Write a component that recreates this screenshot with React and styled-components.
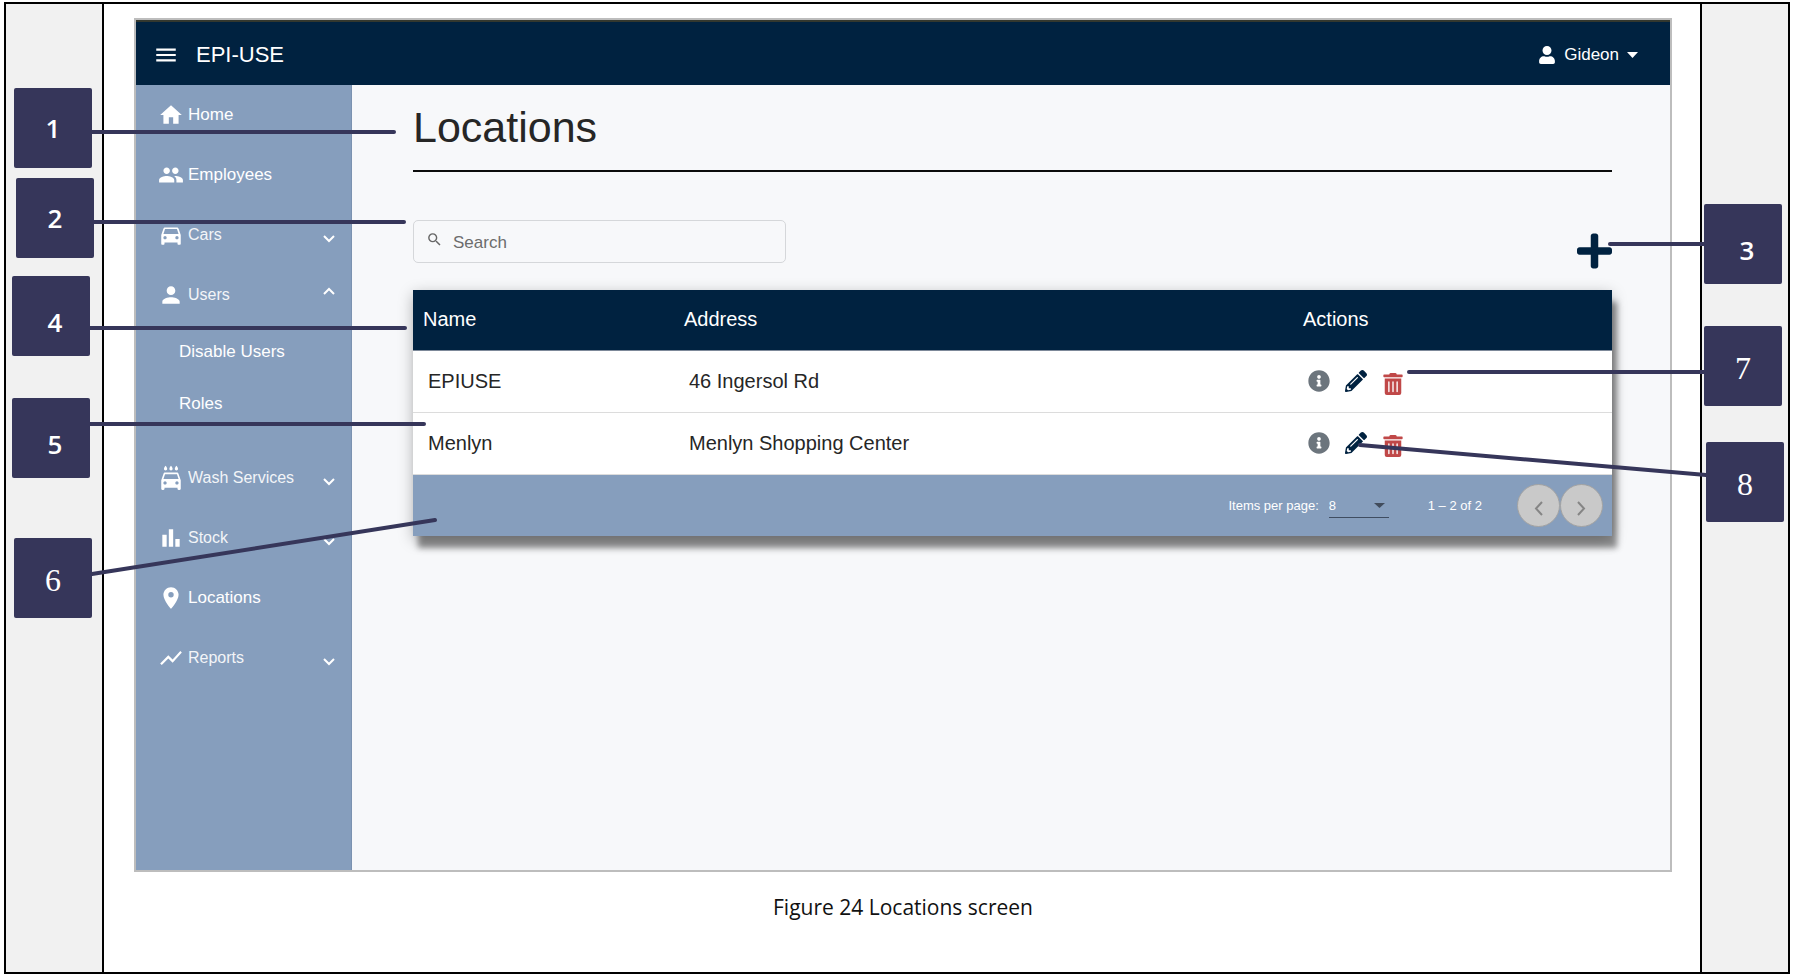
import React from "react";
import styled, { createGlobalStyle } from "styled-components";
import {
  MdMenu, MdHome, MdPeople, MdDirectionsCar, MdPerson, MdLocalCarWash,
  MdBarChart, MdLocationOn, MdShowChart, MdSearch,
} from "react-icons/md";
import { FaUser, FaInfoCircle, FaPencilAlt, FaTrashAlt, FaPlus } from "react-icons/fa";

const navy = "#002240";
const steel = "#869ebd";
const plum = "#36365a";

const GlobalStyle = createGlobalStyle`
  * { box-sizing: border-box; }
  body {
    margin: 0;
    background: #fff;
    color: #212529;
    font-family: "Liberation Sans", Arial, sans-serif;
  }
  button { font: inherit; color: inherit; background: none; border: 0; padding: 0; cursor: pointer; }
  a { color: inherit; text-decoration: none; }
  svg { display: block; flex: none; }
`;

const Sheet = styled.div`
  min-height: 100vh;
  padding: 2px 6px 6px 4px;
  display: flex;
`;

const Frame = styled.div`
  position: relative;
  flex: 1;
  display: grid;
  grid-template-columns: 98px minmax(0, 1fr) 88px;
  border: 2px solid #000;
`;

const Gutter = styled.div`
  background: #f1f1f1;
  border-left: ${(p) => (p.$side === "right" ? "2px solid #000" : "0")};
  border-right: ${(p) => (p.$side === "left" ? "2px solid #000" : "0")};
`;

const Figure = styled.figure`
  margin: 0;
  padding: 14px 28px 0 30px;
  display: flex;
  flex-direction: column;
`;

const Caption = styled.figcaption`
  height: 100px;
  padding-top: 19px;
  text-align: center;
  color: #111;
  font: 400 21px/32px "Open Sans", "Noto Sans", sans-serif;
`;

const Screen = styled.div`
  flex: 1;
  display: flex;
  flex-direction: column;
  border: 2px solid #bdbdbd;
  background: #f7f8fa;
`;

const TopBar = styled.header`
  height: 65px;
  padding: 2px 32px 0 17px;
  display: flex;
  align-items: center;
  gap: 17px;
  background: ${navy};
  border-top: 2px solid #33382f;
  color: #fff;
`;

const Brand = styled.span`
  font-size: 22px;
  line-height: 28px;
`;

const UserMenu = styled.button`
  margin-left: auto;
  display: flex;
  align-items: center;
  gap: 8px;
  font-size: 17px;
  line-height: 24px;
`;

const Body = styled.div`
  flex: 1;
  display: grid;
  grid-template-columns: 216px minmax(0, 1fr);
`;

const SideNav = styled.nav`
  background: ${steel};
  border-right: 1px solid #7b92b0;
  color: #fff;
`;

const NavItem = styled.a`
  height: 60px;
  padding: 0 16px 0 22px;
  display: flex;
  align-items: center;
  gap: 4px;
  font-size: 17px;
`;

const NavGroup = styled.button`
  width: 100%;
  height: 60px;
  padding: 0 16px 0 22px;
  display: flex;
  align-items: center;
  gap: 4px;
  font-size: 16px;
`;

const GroupLabel = styled.span`
  flex: 1;
  text-align: left;
  opacity: 0.9;
`;

const Chevron = styled.svg`
  margin-top: ${(p) => (p.$open ? "0" : "8px")};
  margin-bottom: ${(p) => (p.$open ? "8px" : "0")};
`;

const SubNav = styled.div`
  padding: 1px 0 18px;
`;

const SubItem = styled.a`
  height: 52px;
  padding-left: 43px;
  display: flex;
  align-items: center;
  font-size: 17px;
`;

const Main = styled.main`
  padding: 17px 58px 0 61px;
`;

const Title = styled.h1`
  margin: 0;
  padding-bottom: 18px;
  border-bottom: 2px solid #0c0c0c;
  font-size: 43px;
  font-weight: 400;
  line-height: 50px;
  color: #262626;
`;

const Tools = styled.div`
  margin: 48px 0 19px;
  display: flex;
  justify-content: space-between;
  align-items: flex-end;
  height: 51px;
`;

const SearchBox = styled.label`
  align-self: flex-start;
  width: 373px;
  height: 43px;
  padding: 0 12px;
  display: flex;
  align-items: center;
  gap: 10px;
  border: 1px solid #d5d7da;
  border-radius: 5px;
  color: #666;

  svg { margin-bottom: 4px; }
`;

const SearchInput = styled.input`
  flex: 1;
  min-width: 0;
  padding: 2px 0 0;
  border: 0;
  outline: 0;
  background: none;
  font: 17px/24px "Liberation Sans", Arial, sans-serif;
  color: #262626;

  &::placeholder { color: #6c6c6c; opacity: 1; }
`;

const AddButton = styled.button`
  color: ${navy};

  svg { width: 35px; height: 40px; }
`;

const Panel = styled.section`
  box-shadow: 5px 12px 6px rgba(0, 0, 0, 0.42), 0 4px 14px rgba(0, 0, 0, 0.28);
`;

const Table = styled.table`
  width: 100%;
  table-layout: fixed;
  border-collapse: collapse;
  background: #fff;
  font-size: 20px;
`;

const HeadCell = styled.th`
  width: ${(p) => p.$width || "auto"};
  height: 60px;
  padding: 0 0 0 10px;
  background: ${navy};
  border-bottom: 1px solid #7d8999;
  color: #fff;
  font-weight: 400;
  text-align: left;
`;

const Cell = styled.td`
  height: 62px;
  padding: 0 0 0 15px;
  border-bottom: 1px solid #dcdcdc;
  color: #262626;
`;

const RowActions = styled.div`
  display: flex;
  align-items: center;
  gap: 15px;
`;

const ActionButton = styled.button`
  color: ${(p) => p.$color};
  margin-top: ${(p) => (p.$low ? "6px" : "0")};
`;

const Paginator = styled.div`
  height: 61px;
  padding-right: 9px;
  display: flex;
  align-items: center;
  justify-content: flex-end;
  background: ${steel};
  color: #fff;
  font-size: 13px;
`;

const PageSize = styled.label`
  display: flex;
  align-items: center;
  gap: 10px;
`;

const SelectWrap = styled.span`
  position: relative;
  width: 60px;
  border-bottom: 1px solid #3f4d61;

  svg { position: absolute; right: 4px; top: 10px; pointer-events: none; }
`;

const PageSelect = styled.select`
  display: block;
  width: 100%;
  height: 24px;
  padding: 2px 0 0;
  border: 0;
  outline: 0;
  appearance: none;
  background: none;
  color: #fff;
  font: 13px "Liberation Sans", Arial, sans-serif;
`;

const Range = styled.span`
  margin: 0 35px 0 39px;
`;

const PageButton = styled.button`
  width: 43px;
  height: 43px;
  padding-top: 6px;
  display: grid;
  place-items: center;
  border: 1px solid #a3a3a3;
  border-radius: 50%;
  background: #c9c9c9;
  color: #858585;
`;

const Overlay = styled.div`
  position: absolute;
  top: 0;
  bottom: 0;
  width: 460px;
  pointer-events: none;
  ${(p) => p.$side}: 0;
`;

const Leaders = styled.svg`
  width: 100%;
  height: 100%;
  overflow: visible;
  stroke: ${plum};
  stroke-width: 4;
  stroke-linecap: round;
`;

const Badge = styled.span`
  position: absolute;
  left: ${(p) => p.$x}px;
  top: ${(p) => p.$y}px;
  width: 78px;
  height: 80px;
  padding: ${(p) => (p.$low ? "12px 0 0 8px" : p.$serif ? "4px 0 0" : "0")};
  display: grid;
  place-items: center;
  border-radius: 2px;
  background: ${plum};
  color: #fff;
  font: ${(p) => (p.$serif ? '32px "Liberation Serif", serif' : '600 26px "Open Sans", sans-serif')};
`;

const leftNotes = [
  { n: 1, x: 8, y: 84, line: [86, 128, 388, 128] },
  { n: 2, x: 10, y: 174, line: [88, 218, 398, 218] },
  { n: 4, x: 6, y: 272, low: true, line: [84, 324, 399, 324] },
  { n: 5, x: 6, y: 394, low: true, line: [84, 420, 418, 420] },
  { n: 6, x: 8, y: 534, serif: true, line: [86, 570, 429, 516] },
];

const rightNotes = [
  { n: 3, x: 376, y: 200, low: true, line: [282, 240, 376, 240] },
  { n: 7, x: 376, y: 322, serif: true, line: [81, 368, 376, 368] },
  { n: 8, x: 378, y: 438, serif: true, line: [32, 441, 378, 471] },
];

function Notes({ side, items }) {
  return (
    <Overlay $side={side}>
      <Leaders aria-hidden="true">
        {items.map(({ n, line }) => (
          <line key={n} x1={line[0]} y1={line[1]} x2={line[2]} y2={line[3]} />
        ))}
      </Leaders>
      {items.map(({ n, x, y, low, serif }) => (
        <Badge key={n} $x={x} $y={y} $low={low} $serif={serif}>{n}</Badge>
      ))}
    </Overlay>
  );
}

function Group({ icon: Icon, label, open }) {
  return (
    <NavGroup type="button" aria-expanded={!!open}>
      <Icon size={26} />
      <GroupLabel>{label}</GroupLabel>
      <Chevron $open={open} width="12" height="8" viewBox="0 0 12 8" fill="none" stroke="#fff" strokeWidth="2">
        <path d={open ? "M1 7l5-5 5 5" : "M1 1l5 5 5-5"} />
      </Chevron>
    </NavGroup>
  );
}

function Item({ icon: Icon, label }) {
  return (
    <NavItem href="#">
      <Icon size={26} />
      {label}
    </NavItem>
  );
}

const locations = [
  { name: "EPIUSE", address: "46 Ingersol Rd" },
  { name: "Menlyn", address: "Menlyn Shopping Center" },
];

export default function App() {
  return (
    <Sheet>
      <GlobalStyle />
      <Frame>
        <Gutter $side="left" />
        <Figure>
          <Screen>
            <TopBar>
              <button type="button" aria-label="Menu"><MdMenu size={26} /></button>
              <Brand>EPI-USE</Brand>
              <UserMenu type="button">
                <FaUser size={18} />
                Gideon
                <svg width="11" height="6" viewBox="0 0 11 6" fill="currentColor"><path d="M0 0h11L5.500 6z" /></svg>
              </UserMenu>
            </TopBar>
            <Body>
              <SideNav>
                <Item icon={MdHome} label="Home" />
                <Item icon={MdPeople} label="Employees" />
                <Group icon={MdDirectionsCar} label="Cars" />
                <Group icon={MdPerson} label="Users" open />
                <SubNav>
                  <SubItem href="#">Disable Users</SubItem>
                  <SubItem href="#">Roles</SubItem>
                </SubNav>
                <Group icon={MdLocalCarWash} label="Wash Services" />
                <Group icon={MdBarChart} label="Stock" />
                <Item icon={MdLocationOn} label="Locations" />
                <Group icon={MdShowChart} label="Reports" />
              </SideNav>
              <Main>
                <Title>Locations</Title>
                <Tools>
                  <SearchBox>
                    <MdSearch size={17} />
                    <SearchInput type="text" placeholder="Search" aria-label="Search" />
                  </SearchBox>
                  <AddButton type="button" aria-label="Add location">
                    <FaPlus />
                  </AddButton>
                </Tools>
                <Panel>
                  <Table>
                    <thead>
                      <tr>
                        <HeadCell $width="261px">Name</HeadCell>
                        <HeadCell>Address</HeadCell>
                        <HeadCell $width="319px">Actions</HeadCell>
                      </tr>
                    </thead>
                    <tbody>
                      {locations.map((row) => (
                        <tr key={row.name}>
                          <Cell>{row.name}</Cell>
                          <Cell>{row.address}</Cell>
                          <Cell>
                            <RowActions>
                              <ActionButton type="button" aria-label="Details" $color="#6c757d"><FaInfoCircle size={22} /></ActionButton>
                              <ActionButton type="button" aria-label="Edit" $color={navy}><FaPencilAlt size={22} /></ActionButton>
                              <ActionButton type="button" aria-label="Delete" $color="#c04848" $low><FaTrashAlt size={22} /></ActionButton>
                            </RowActions>
                          </Cell>
                        </tr>
                      ))}
                    </tbody>
                  </Table>
                  <Paginator>
                    <PageSize>
                      Items per page:
                      <SelectWrap>
                        <PageSelect defaultValue="8">
                          <option>8</option>
                          <option>16</option>
                        </PageSelect>
                        <svg width="11" height="5" viewBox="0 0 11 5" fill="#414c5c"><path d="M0 0h11L5.500 5z" /></svg>
                      </SelectWrap>
                    </PageSize>
                    <Range>1 – 2 of 2</Range>
                    <PageButton type="button" aria-label="Previous page">
                      <svg width="9" height="15" viewBox="0 0 9 15" fill="none" stroke="currentColor" strokeWidth="2"><path d="M8 1L2 7.500l6 6.500" /></svg>
                    </PageButton>
                    <PageButton type="button" aria-label="Next page">
                      <svg width="9" height="15" viewBox="0 0 9 15" fill="none" stroke="currentColor" strokeWidth="2"><path d="M1 1l6 6.500L1 14" /></svg>
                    </PageButton>
                  </Paginator>
                </Panel>
              </Main>
            </Body>
          </Screen>
          <Caption>Figure 24 Locations screen</Caption>
        </Figure>
        <Gutter $side="right" />
        <Notes side="left" items={leftNotes} />
        <Notes side="right" items={rightNotes} />
      </Frame>
    </Sheet>
  );
}
